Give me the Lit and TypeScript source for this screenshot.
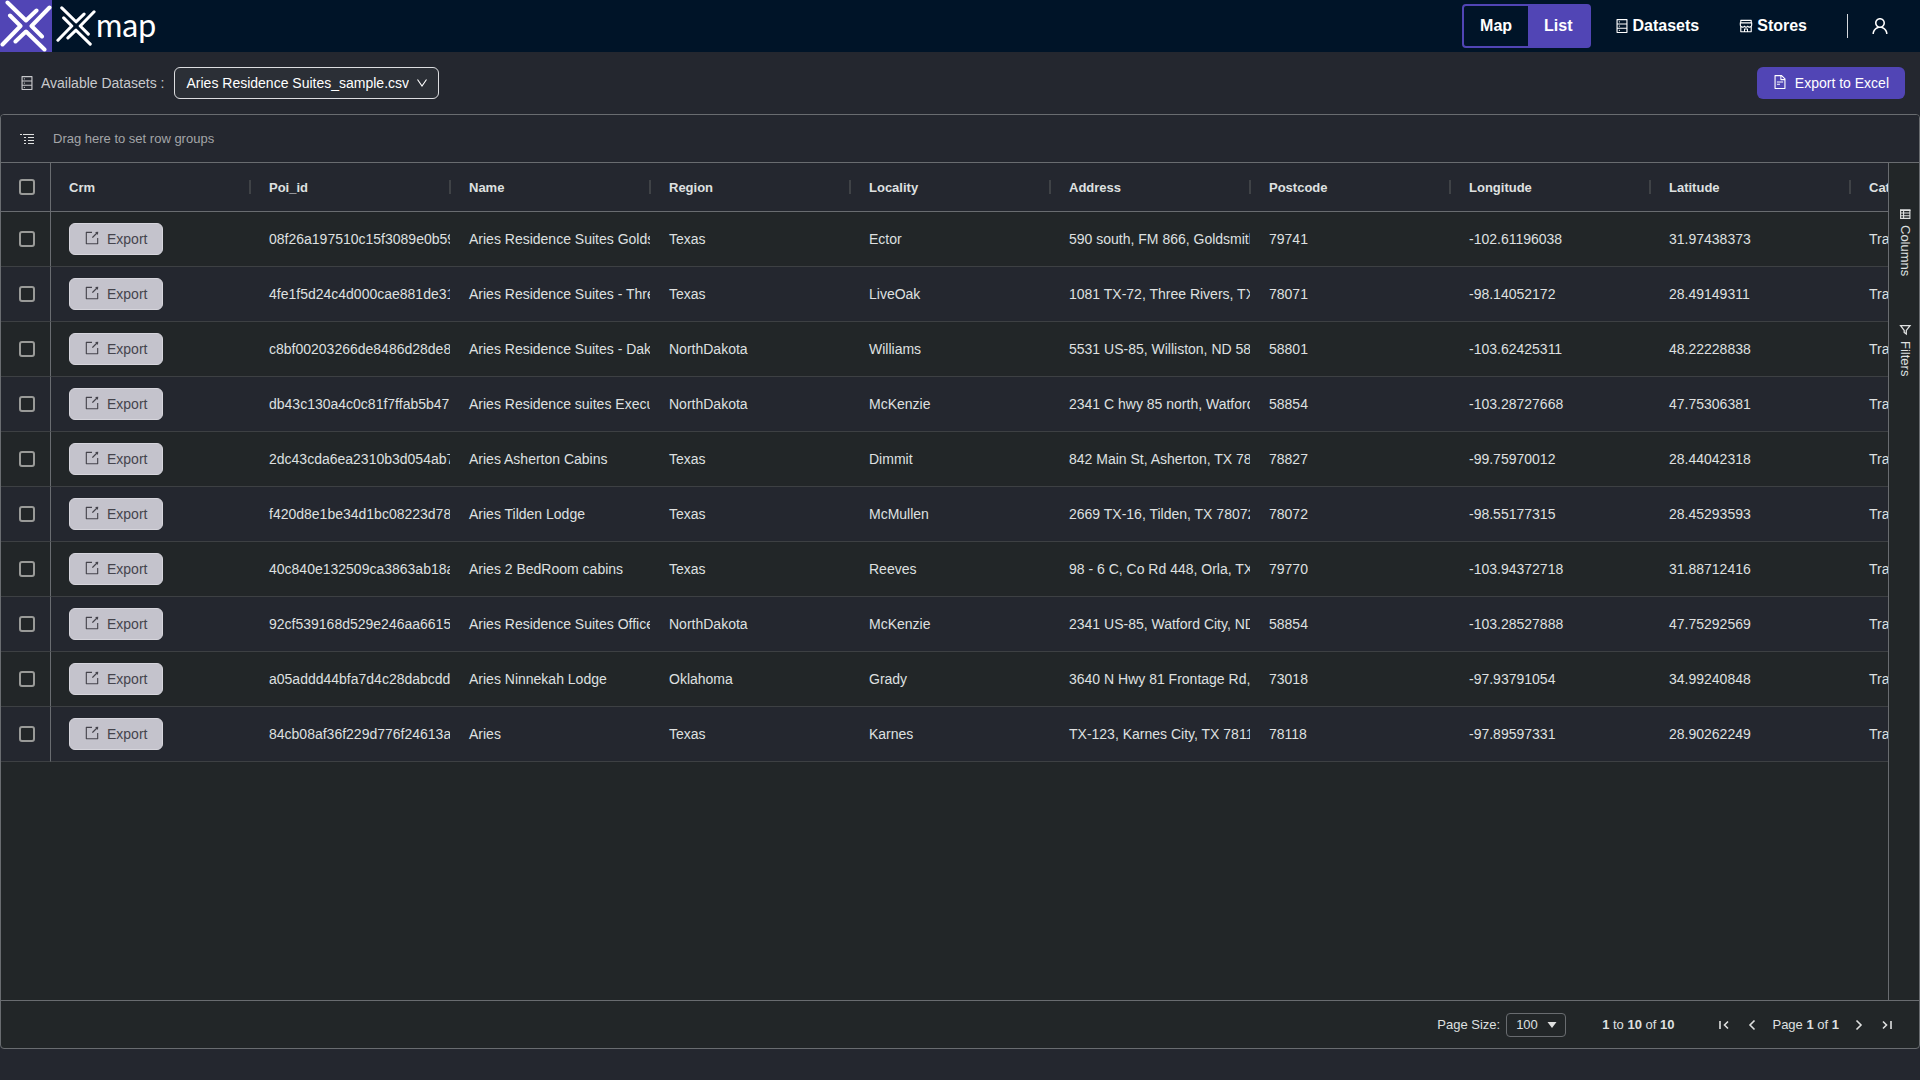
import { LitElement, html, svg, css } from "lit";
import { customElement, property, state } from "lit/decorators.js";

const ICONS: Record<string, string> = {
  database:
    "M832 64H192c-17.7 0-32 14.3-32 32v832c0 17.7 14.3 32 32 32h640c17.7 0 32-14.3 32-32V96c0-17.7-14.3-32-32-32zm-600 72h560v208H232V136zm560 480H232V408h560v208zm0 272H232V680h560v208zM304 240a40 40 0 1080 0 40 40 0 10-80 0zm0 272a40 40 0 1080 0 40 40 0 10-80 0zm0 272a40 40 0 1080 0 40 40 0 10-80 0z",
  shop: "M882 272.1V144c0-17.7-14.3-32-32-32H174c-17.7 0-32 14.3-32 32v128.1c-16.7 1-30 14.9-30 31.9v131.7a177 177 0 0014.4 70.4c4.3 10.2 9.6 19.8 15.6 28.9v345c0 17.6 14.3 32 32 32h676c17.7 0 32-14.3 32-32V535a175 175 0 0015.6-28.9c9.5-22.3 14.4-46 14.4-70.4V304c0-17-13.3-30.9-30-31.9zM214 184h596v88H214v-88zm362 656.1H448V736h128v104.1zm234 0H640V704c0-17.7-14.3-32-32-32H416c-17.7 0-32 14.3-32 32v136.1H214V597.9c2.9 1.4 5.9 2.8 9 4 22.3 9.4 46 14.1 70.4 14.1s48-4.7 70.4-14.1c13.8-5.8 26.8-13.2 38.7-22.1.2-.1.4-.1.6 0a180.4 180.4 0 0038.7 22.1c22.3 9.4 46 14.1 70.4 14.1 24.4 0 48-4.7 70.4-14.1 13.8-5.8 26.8-13.2 38.7-22.1.2-.1.4-.1.6 0a180.4 180.4 0 0038.7 22.1c22.3 9.4 46 14.1 70.4 14.1 24.4 0 48-4.7 70.4-14.1 3-1.3 6-2.6 9-4v242.2zm30-404.4c0 59.8-49 108.3-109.3 108.3-40.8 0-76.4-22.1-95.2-54.9-2.9-5-8.1-8.1-13.9-8.1h-.6c-5.7 0-11 3.1-13.9 8.1A109.24 109.24 0 01512 544c-40.7 0-76.2-22-95-54.7-3-5.1-8.4-8.3-14.3-8.3s-11.4 3.2-14.3 8.3a109.63 109.63 0 01-95.1 54.7C233 544 184 495.5 184 435.7v-91.2c0-.3.2-.5.5-.5h655c.3 0 .5.2.5.5v91.2z",
  user: "M858.5 763.6a374 374 0 00-80.6-119.5 375.63 375.63 0 00-119.5-80.6c-.4-.2-.8-.3-1.2-.5C719.5 518 760 444.7 760 362c0-137-111-248-248-248S264 225 264 362c0 82.7 40.5 156 102.8 201.1-.4.2-.8.3-1.2.5-44.8 18.9-85 46-119.5 80.6a375.63 375.63 0 00-80.6 119.5A371.7 371.7 0 00136 901.8a8 8 0 008 8.2h60c4.4 0 7.9-3.5 8-7.8 2-77.2 33-149.5 87.8-204.3 56.7-56.7 132-87.9 212.2-87.9s155.5 31.2 212.2 87.9C779 752.7 810 825 812 902.2c.1 4.4 3.6 7.8 8 7.8h60a8 8 0 008-8.2c-1-47.8-10.9-94.3-29.5-138.2zM512 534c-45.9 0-89.1-17.9-121.6-50.4S340 407.9 340 362c0-45.9 17.9-89.1 50.4-121.6S466.1 190 512 190s89.1 17.9 121.6 50.4S684 316.1 684 362c0 45.9-17.9 89.1-50.4 121.6S557.9 534 512 534z",
  file: "M854.6 288.6L639.4 73.4c-6-6-14.1-9.4-22.6-9.4H192c-17.7 0-32 14.3-32 32v832c0 17.7 14.3 32 32 32h640c17.7 0 32-14.3 32-32V311.3c0-8.5-3.4-16.7-9.4-22.7zM790.2 326H602V137.8L790.2 326zm1.8 562H232V136h302v216a42 42 0 0042 42h216v494zM504 618H320c-4.4 0-8 3.6-8 8v48c0 4.4 3.6 8 8 8h184c4.4 0 8-3.6 8-8v-48c0-4.4-3.6-8-8-8zM312 490v48c0 4.4 3.6 8 8 8h384c4.4 0 8-3.6 8-8v-48c0-4.4-3.6-8-8-8H320c-4.4 0-8 3.6-8 8z",
  export:
    "M880 912H144c-17.7 0-32-14.3-32-32V144c0-17.7 14.3-32 32-32h360c4.4 0 8 3.6 8 8v56c0 4.4-3.6 8-8 8H184v656h656V520c0-4.4 3.6-8 8-8h56c4.4 0 8 3.6 8 8v360c0 17.7-14.3 32-32 32zM770.87 199.13l-52.2-52.2a8.01 8.01 0 014.7-13.6l179.4-21c5.1-.6 9.5 3.7 8.9 8.9l-21 179.4c-.8 6.6-8.9 9.4-13.6 4.7l-52.4-52.4-256.2 256.2a8.03 8.03 0 01-11.3 0l-42.4-42.4a8.03 8.03 0 010-11.3l256.1-256.3z",
};

const icon = (name: string, size = 14) => html`
  <svg viewBox="64 64 896 896" width=${size} height=${size} fill="currentColor" aria-hidden="true">
    <path d=${ICONS[name]}></path>
  </svg>
`;

const crossMark = (size: number) => html`
  <svg viewBox="0 0 52 52" width=${size} height=${size} fill="none" stroke="#fff" stroke-width="4"
    stroke-linecap="round" stroke-linejoin="round" aria-hidden="true">
    <path d="M7.5 2.5L26 20.5L36.5 10.5M49.5 7.5L31.5 26L42 36.5M44.5 49.5L26 31.5L15.5 41.5M2.5 44.5L20.5 26L10 15.5"></path>
  </svg>
`;

const lineIcon = (content: unknown, size = 16) => html`
  <svg viewBox="0 0 16 16" width=${size} height=${size} fill="none" stroke="currentColor"
    stroke-width="1.6" aria-hidden="true">${content}</svg>
`;

interface Poi {
  id: string;
  name: string;
  region: string;
  locality: string;
  address: string;
  postcode: string;
  longitude: string;
  latitude: string;
  category: string;
}

const poi = (
  id: string, name: string, region: string, locality: string, address: string,
  postcode: string, longitude: string, latitude: string,
): Poi => ({ id, name, region, locality, address, postcode, longitude, latitude, category: "Travel" });

const ROWS: Poi[] = [
  poi("08f26a197510c15f3089e0b59", "Aries Residence Suites Goldsmith", "Texas", "Ector", "590 south, FM 866, Goldsmith", "79741", "-102.61196038", "31.97438373"),
  poi("4fe1f5d24c4d000cae881de31", "Aries Residence Suites - Three Rivers", "Texas", "LiveOak", "1081 TX-72, Three Rivers, TX", "78071", "-98.14052172", "28.49149311"),
  poi("c8bf00203266de8486d28de8", "Aries Residence Suites - Dakota", "NorthDakota", "Williams", "5531 US-85, Williston, ND 58801", "58801", "-103.62425311", "48.22228838"),
  poi("db43c130a4c0c81f7ffab5b47", "Aries Residence suites Executive", "NorthDakota", "McKenzie", "2341 C hwy 85 north, Watford", "58854", "-103.28727668", "47.75306381"),
  poi("2dc43cda6ea2310b3d054ab7", "Aries Asherton Cabins", "Texas", "Dimmit", "842 Main St, Asherton, TX 78827", "78827", "-99.75970012", "28.44042318"),
  poi("f420d8e1be34d1bc08223d78", "Aries Tilden Lodge", "Texas", "McMullen", "2669 TX-16, Tilden, TX 78072", "78072", "-98.55177315", "28.45293593"),
  poi("40c840e132509ca3863ab18a", "Aries 2 BedRoom cabins", "Texas", "Reeves", "98 - 6 C, Co Rd 448, Orla, TX", "79770", "-103.94372718", "31.88712416"),
  poi("92cf539168d529e246aa6615", "Aries Residence Suites Office", "NorthDakota", "McKenzie", "2341 US-85, Watford City, ND", "58854", "-103.28527888", "47.75292569"),
  poi("a05addd44bfa7d4c28dabcdd", "Aries Ninnekah Lodge", "Oklahoma", "Grady", "3640 N Hwy 81 Frontage Rd,", "73018", "-97.93791054", "34.99240848"),
  poi("84cb08af36f229d776f24613a", "Aries", "Texas", "Karnes", "TX-123, Karnes City, TX 78118", "78118", "-97.89597331", "28.90262249"),
];

const FIELDS: [keyof Poi, string][] = [
  ["id", "Poi_id"],
  ["name", "Name"],
  ["region", "Region"],
  ["locality", "Locality"],
  ["address", "Address"],
  ["postcode", "Postcode"],
  ["longitude", "Longitude"],
  ["latitude", "Latitude"],
  ["category", "Category"],
];

const base = css`
  *, *::before, *::after { box-sizing: border-box; }
  svg { display: block; flex: none; }
  button, select, input { font: inherit; color: inherit; margin: 0; }
  button { border: 0; padding: 0; background: none; cursor: pointer; }
  a { color: inherit; text-decoration: none; }
`;

@customElement("site-header")
class SiteHeader extends LitElement {
  static styles = [base, css`
    :host { display: block; }
    .bar { display: flex; align-items: center; height: 52px; background: #001428; color: #fff; }
    .badge { display: flex; background: #5145b5; }
    .brand { display: flex; align-items: center; margin-left: 4px; }
    .word { padding-bottom: 2px; font: 400 32px/40px Lato, "Open Sans", sans-serif; }
    .nav { display: flex; align-items: center; margin-left: auto; padding-right: 31px; font-size: 16px; font-weight: 700; }
    .switch { display: flex; height: 44px; border: 2px solid #5145b5; border-radius: 4px; }
    .tab { padding: 0 16px; }
    .active { background: #5145b5; }
    .link { display: flex; align-items: center; gap: 4px; }
    .datasets { margin-left: 24px; }
    .stores { margin-left: 40px; }
    .rule { width: 1px; height: 24px; margin: 0 23px 0 40px; background: #d5d9de; }
  `];

  render() {
    return html`
      <header class="bar">
        <a class="badge" href="#" aria-label="Home">${crossMark(52)}</a>
        <a class="brand" href="#">${crossMark(40)}<span class="word">map</span></a>
        <nav class="nav">
          <div class="switch">
            <button class="tab">Map</button>
            <button class="tab active" aria-pressed="true">List</button>
          </div>
          <a class="link datasets" href="#">${icon("database")}Datasets</a>
          <a class="link stores" href="#">${icon("shop")}Stores</a>
          <span class="rule"></span>
          <button aria-label="Account">${icon("user", 18)}</button>
        </nav>
      </header>
    `;
  }
}

@customElement("dataset-bar")
class DatasetBar extends LitElement {
  static styles = [base, css`
    :host { display: block; }
    .bar { display: flex; align-items: center; justify-content: space-between; padding: 15px 15px 15px 20px; color: #c9cacd; }
    .picker { display: flex; align-items: center; }
    .label { margin: 0 10px 0 7px; }
    .field { display: grid; align-items: center; color: #fff; }
    .select, .chevron { grid-area: 1 / 1; }
    .select { appearance: none; height: 32px; padding: 0 29px 0 11px; border: 1px solid #dcdde0; border-radius: 6px; background: #2b2f36; }
    .chevron { justify-self: end; margin-right: 11px; pointer-events: none; }
    .excel { display: flex; align-items: center; gap: 8px; height: 32px; padding: 0 16px; border-radius: 6px; background: #5145b5; color: #fff; }
    .excel svg { margin-bottom: 2px; }
  `];

  render() {
    return html`
      <div class="bar">
        <div class="picker">
          ${icon("database")}
          <label class="label" for="dataset">Available Datasets :</label>
          <div class="field">
            <select class="select" id="dataset">
              <option>Aries Residence Suites_sample.csv</option>
            </select>
            <svg class="chevron" viewBox="0 0 12 12" width="12" height="12" fill="none" stroke="currentColor" aria-hidden="true">
              <path d="M1.5 2.5L6 9L10.5 2.5" stroke-width="1.1"></path>
            </svg>
          </div>
        </div>
        <button class="excel">${icon("file")}Export to Excel</button>
      </div>
    `;
  }
}

@customElement("side-bar")
class SideBar extends LitElement {
  static styles = [base, css`
    :host { display: block; border-left: 1px solid #696c70; padding-top: 20px; font-size: 13px; color: #dfe0e0; }
    .tab { display: flex; align-items: center; justify-content: center; gap: 3px; width: 30px; padding: 23px 0 23px 2px; writing-mode: vertical-lr; line-height: 20px; }
  `];

  render() {
    return html`
      <button class="tab">
        ${lineIcon(svg`<path d="M3 4.2H13.5" stroke-width="1.8"></path><path d="M3.6 4V12.4H12.9V4M3.5 7H13M3.5 9.7H13M6.6 5V12" stroke-width="1.1"></path>`)}
        Columns
      </button>
      <button class="tab">
        ${lineIcon(svg`<path d="M3.6 3.7H13L9.3 8.4V12L7.2 10.4V8.4Z" stroke-width="1.3"></path>`)}
        Filters
      </button>
    `;
  }
}

@customElement("page-bar")
class PageBar extends LitElement {
  static styles = [base, css`
    :host { display: flex; align-items: center; justify-content: flex-end; height: 48px; padding-right: 24px; border-top: 1px solid #696c70; font-size: 13px; color: #dfe0e0; }
    .label { margin-right: 6px; }
    .field { display: grid; align-items: center; }
    .select, .caret { grid-area: 1 / 1; }
    .select { appearance: none; width: 60px; height: 24px; padding: 0 9px; border: 1px solid #696c70; border-radius: 4px; background: transparent; }
    .caret { justify-self: end; margin-right: 9px; pointer-events: none; }
    .summary { margin: 0 42px 0 36px; }
    .pages { display: flex; align-items: center; gap: 12px; }
  `];

  render() {
    return html`
      <label class="label" for="size">Page Size:</label>
      <div class="field">
        <select class="select" id="size"><option>100</option></select>
        <svg class="caret" viewBox="0 0 10 6" width="10" height="6" fill="currentColor" aria-hidden="true"><path d="M0.5 0H9.5L5 6Z"></path></svg>
      </div>
      <span class="summary"><b>1</b> to <b>10</b> of <b>10</b></span>
      <div class="pages">
        <button aria-label="First page">${lineIcon(svg`<path d="M4 4V12M12 4.5L8.5 8L12 11.5"></path>`)}</button>
        <button aria-label="Previous page">${lineIcon(svg`<path d="M10.5 3.5L6 8L10.5 12.5"></path>`)}</button>
        <span>Page <b>1</b> of <b>1</b></span>
        <button aria-label="Next page">${lineIcon(svg`<path d="M5.5 3.5L10 8L5.5 12.5"></path>`)}</button>
        <button aria-label="Last page">${lineIcon(svg`<path d="M12 4V12M4 4.5L7.5 8L4 11.5"></path>`)}</button>
      </div>
    `;
  }
}

@customElement("poi-grid")
class PoiGrid extends LitElement {
  @property({ attribute: false }) rows: Poi[] = [];
  @state() private selected = new Set<string>();

  static styles = [base, css`
    :host { display: flex; flex-direction: column; overflow: hidden; border: 1px solid #696c70; border-radius: 4px; background: #222628; color: #dfe0e0; }
    .groups { display: flex; align-items: center; gap: 18px; height: 48px; padding-left: 18px; border-bottom: 1px solid #696c70; background: #24272f; font-size: 13px; }
    .hint { color: #a3a5a8; }
    .body { display: flex; flex: 1; }
    .view { flex: 1; min-width: 0; overflow: hidden; }
    .table { width: 2050px; table-layout: fixed; border-collapse: separate; border-spacing: 0; }
    .pick { width: 50px; }
    .head, .cell { padding: 0; text-align: left; white-space: nowrap; overflow: hidden; }
    .head { height: 49px; border-bottom: 1px solid #696c70; background: #24272f; font-size: 13px; font-weight: 700; }
    .cell { height: 55px; border-bottom: 1px solid #3d4043; }
    .row:nth-child(even) { background: #24272f; }
    .pin { border-right: 1px solid #696c70; }
    .title { display: flex; align-items: center; height: 14px; padding: 2px 0 0 18px; border-right: 2px solid #3f4246; }
    .clip { margin-right: 1px; padding-left: 18px; overflow: hidden; line-height: 20px; }
    .check { appearance: none; display: block; width: 16px; height: 16px; margin-left: 18px; border: 2px solid #999a98; border-radius: 3px; background: #222628; }
    .check:checked { background: #5145b5; }
    .export { display: flex; align-items: center; gap: 8px; height: 32px; padding: 0 15px; border: 1px solid #d6d5dc; border-radius: 6px; background: #c4c3cc; color: #45444c; }
    .export svg { margin-bottom: 2px; }
  `];

  private toggle(id: string) {
    const next = new Set(this.selected);
    next.has(id) ? next.delete(id) : next.add(id);
    this.selected = next;
  }

  private toggleAll() {
    this.selected = this.selected.size ? new Set() : new Set(this.rows.map((r) => r.id));
  }

  render() {
    return html`
      <div class="groups">
        <svg viewBox="0 0 16 16" width="16" height="16" fill="currentColor" aria-hidden="true">
          <path d="M1 3h2v1H1zM4 3h11v1H4zM5 6h2v1H5zM9 6h6v1H9zM5 9h2v1H5zM9 9h6v1H9zM5 12h2v1H5zM9 12h6v1H9z"></path>
        </svg>
        <span class="hint">Drag here to set row groups</span>
      </div>
      <div class="body">
        <div class="view">
          <table class="table">
            <thead>
              <tr>
                <th class="head pin pick" scope="col">
                  <input class="check" type="checkbox" aria-label="Select all rows" @change=${this.toggleAll} />
                </th>
                <th class="head" scope="col"><div class="title">Crm</div></th>
                ${FIELDS.map(([, label]) => html`<th class="head" scope="col"><div class="title">${label}</div></th>`)}
              </tr>
            </thead>
            <tbody>
              ${this.rows.map((row) => html`
                <tr class="row">
                  <td class="cell pin">
                    <input class="check" type="checkbox" aria-label="Select row" .checked=${this.selected.has(row.id)}
                      @change=${() => this.toggle(row.id)} />
                  </td>
                  <td class="cell"><div class="clip"><button class="export">${icon("export")}Export</button></div></td>
                  ${FIELDS.map(([key]) => html`<td class="cell"><div class="clip">${row[key]}</div></td>`)}
                </tr>
              `)}
            </tbody>
          </table>
        </div>
        <side-bar></side-bar>
      </div>
      <page-bar></page-bar>
    `;
  }
}

@customElement("app-root")
class AppRoot extends LitElement {
  static styles = css`
    :host { display: flex; flex-direction: column; min-height: 100vh; box-sizing: border-box; padding-bottom: 31px; background: #24272f; font: 14px/20px "Liberation Sans", Arial, sans-serif; }
    .grid { flex: 1; }
  `;

  render() {
    return html`
      <site-header></site-header>
      <dataset-bar></dataset-bar>
      <poi-grid class="grid" .rows=${ROWS}></poi-grid>
    `;
  }
}
